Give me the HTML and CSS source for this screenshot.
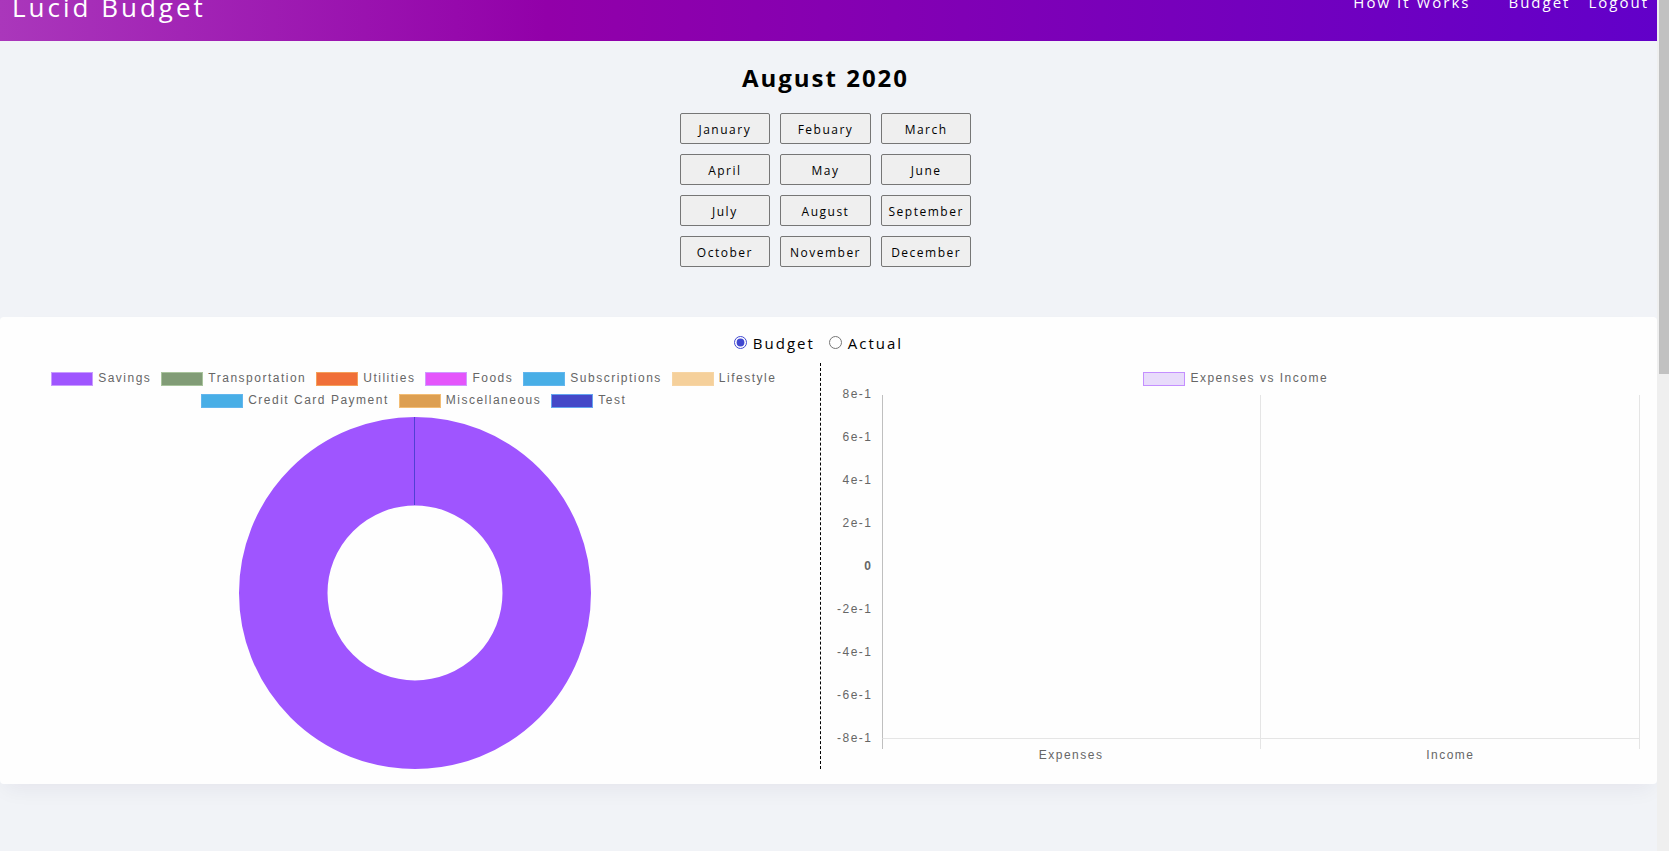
FILE: index.html
```html
<!DOCTYPE html>
<html lang="en">
<head>
<meta charset="utf-8">
<title>Lucid Budget</title>
<link rel="stylesheet" href="styles.css">
</head>
<body>
<div class="page">
  <header class="topbar">
    <a class="brand" href="#">Lucid Budget</a>
    <nav class="nav">
      <a class="nav-link nav-link-wide" href="#">How It Works</a>
      <a class="nav-link" href="#">Budget</a>
      <a class="nav-link" href="#">Logout</a>
    </nav>
  </header>

  <main>
    <section class="period">
      <h1 class="period-title">August 2020</h1>
      <div class="months">
        <button class="month" type="button">January</button>
        <button class="month" type="button">Febuary</button>
        <button class="month" type="button">March</button>
        <button class="month" type="button">April</button>
        <button class="month" type="button">May</button>
        <button class="month" type="button">June</button>
        <button class="month" type="button">July</button>
        <button class="month" type="button">August</button>
        <button class="month" type="button">September</button>
        <button class="month" type="button">October</button>
        <button class="month" type="button">November</button>
        <button class="month" type="button">December</button>
      </div>
    </section>

    <section class="card">
      <div class="modes">
        <label class="mode"><input class="mode-input" type="radio" name="mode" checked>Budget</label>
        <label class="mode"><input class="mode-input" type="radio" name="mode">Actual</label>
      </div>
      <div class="charts">
        <div class="chart chart-categories">
          <ul class="legend">
            <li class="legend-item"><span class="swatch savings"></span>Savings</li>
            <li class="legend-item"><span class="swatch transportation"></span>Transportation</li>
            <li class="legend-item"><span class="swatch utilities"></span>Utilities</li>
            <li class="legend-item"><span class="swatch foods"></span>Foods</li>
            <li class="legend-item"><span class="swatch subscriptions"></span>Subscriptions</li>
            <li class="legend-item"><span class="swatch lifestyle"></span>Lifestyle</li>
            <li class="legend-item"><span class="swatch credit"></span>Credit Card Payment</li>
            <li class="legend-item"><span class="swatch misc"></span>Miscellaneous</li>
            <li class="legend-item"><span class="swatch test"></span>Test</li>
          </ul>
          <svg class="donut" viewBox="0 0 352 352" role="img" aria-label="Budget by category">
            <circle cx="176" cy="176" r="131.75" fill="none" stroke="#9f55ff" stroke-width="88.5"/>
            <path d="M175.500 0V88" stroke="#5040d4" stroke-width="1"/>
          </svg>
        </div>
        <div class="chart chart-totals">
          <ul class="legend">
            <li class="legend-item"><span class="swatch totals"></span>Expenses vs Income</li>
          </ul>
          <div class="plot">
            <ol class="scale">
              <li>8e-1</li>
              <li>6e-1</li>
              <li>4e-1</li>
              <li>2e-1</li>
              <li class="zero">0</li>
              <li>-2e-1</li>
              <li>-4e-1</li>
              <li>-6e-1</li>
              <li>-8e-1</li>
            </ol>
            <div class="area">
              <div class="band"></div>
              <div class="band"></div>
              <div class="tick"></div>
              <div class="tick"></div>
              <div class="band-label">Expenses</div>
              <div class="band-label">Income</div>
            </div>
          </div>
        </div>
      </div>
    </section>
  </main>
</div>
<div class="scrollbar"><div class="thumb"></div></div>
</body>
</html>
```
FILE: styles.css
```css
* {
  box-sizing: border-box;
}

body {
  display: flex;
  height: 100vh;
  margin: 0;
  overflow: hidden;
  background: #f1f3f7;
  color: #000;
  font-family: "Open Sans", "Noto Sans", sans-serif;
  font-size: 15px;
  letter-spacing: 2px;
}

.page {
  flex: 1;
  min-width: 0;
  overflow: hidden;
}

.topbar {
  display: flex;
  align-items: flex-end;
  justify-content: space-between;
  height: 41px;
  padding: 0 8px 16px 12px;
  overflow: hidden;
  background: linear-gradient(to right, #aa37bb, #9200a9 33%, #6200c9);
}

.brand,
.nav-link {
  color: #fff;
  text-decoration: none;
}

.brand {
  font-size: 26px;
  line-height: 36px;
  letter-spacing: 3px;
}

.nav {
  display: flex;
  gap: 18px;
  padding-bottom: 11px;
  line-height: 24px;
}

.nav-link-wide {
  margin-right: 20px;
}

.period {
  padding: 20px 6px 50px 0;
  text-align: center;
}

.period-title {
  margin: 0 0 19px;
  font-size: 24px;
  line-height: 33px;
  letter-spacing: 2px;
}

.months {
  display: grid;
  grid-template-columns: repeat(3, 1fr);
  gap: 10px;
  width: 292px;
  margin: 0 auto;
}

.month {
  height: 31px;
  padding: 2px 0 0;
  border: 1px solid #767676;
  border-radius: 2px;
  background: #efefef;
  color: #000;
  font-family: inherit;
  font-size: 12px;
  letter-spacing: 0.125em;
}

.card {
  padding: 14px 16px 15px 0;
  border-radius: 4px;
  background: #fefefe;
  box-shadow: 0 10px 20px -5px rgba(30, 20, 60, 0.06);
}

.modes {
  display: flex;
  justify-content: center;
  gap: 14px;
  height: 32px;
  padding-right: 4px;
  line-height: 24px;
}

.mode {
  display: flex;
  align-items: center;
  height: 24px;
}

.mode-input {
  width: 13px;
  height: 13px;
  margin: 0 6px 2px 0;
  accent-color: #4048d0;
}

.charts {
  display: grid;
  grid-template-columns: 1fr 1fr;
}

.chart {
  color: #666;
  font-family: "Liberation Sans", Arial, sans-serif;
  font-size: 12px;
  letter-spacing: 0.125em;
}

.chart-categories {
  padding-left: 10px;
  border-right: 1px dashed #000;
}

.chart-totals {
  display: flex;
  flex-direction: column;
  padding: 0 1px 0 13px;
}

.legend {
  display: flex;
  flex-wrap: wrap;
  justify-content: center;
  gap: 8px 10px;
  margin: 0;
  padding: 8px 42px 0 40px;
  list-style: none;
}

.legend-item {
  display: flex;
  gap: 5px;
  line-height: 14px;
}

.swatch {
  width: 42px;
  height: 14px;
  margin-top: 1px;
  margin-bottom: -1px;
  border: 1px solid;
}

.savings { background: #9f55ff; border-color: #c99bff; }
.transportation { background: #819c76; border-color: #a9c49d; }
.utilities { background: #f06f38; border-color: #f5a05a; }
.foods { background: #e455fb; border-color: #cf9bff; }
.subscriptions { background: #48aee6; border-color: #62b6ee; }
.lifestyle { background: #f5d09b; border-color: #f7d5a4; }
.credit { background: #48aee6; border-color: #62b6ee; }
.misc { background: #dd9f51; border-color: #f3bd74; }
.test { background: #4448c8; border-color: #64a4f0; }
.totals { background: #e8dbfb; border-color: #c48fff; }

.donut {
  display: block;
  width: 352px;
  margin: 10px auto 0;
}

.plot {
  display: flex;
  flex: 1;
  padding: 10px 0 7px;
}

.scale {
  display: flex;
  flex-direction: column;
  justify-content: space-between;
  width: 39px;
  margin: -8px 9px 17px 0;
  padding: 0;
  line-height: 14px;
  list-style: none;
  text-align: right;
}

.zero {
  font-weight: bold;
}

.area {
  display: grid;
  flex: 1;
  grid-template-columns: 1fr 1fr;
  grid-template-rows: 1fr 10px 13px;
}

.band,
.tick {
  border-right: 1px solid #e5e5e5;
}

.band {
  border-bottom: 1px solid #e5e5e5;
}

.band:first-child,
.band + .tick {
  border-left: 1px solid #bfbfbf;
}

.band-label {
  line-height: 13px;
  text-align: center;
}

.scrollbar {
  width: 12px;
  padding-left: 2px;
  background: #efefef;
}

.thumb {
  height: 44vh;
  background: #c1c1c1;
}
```
